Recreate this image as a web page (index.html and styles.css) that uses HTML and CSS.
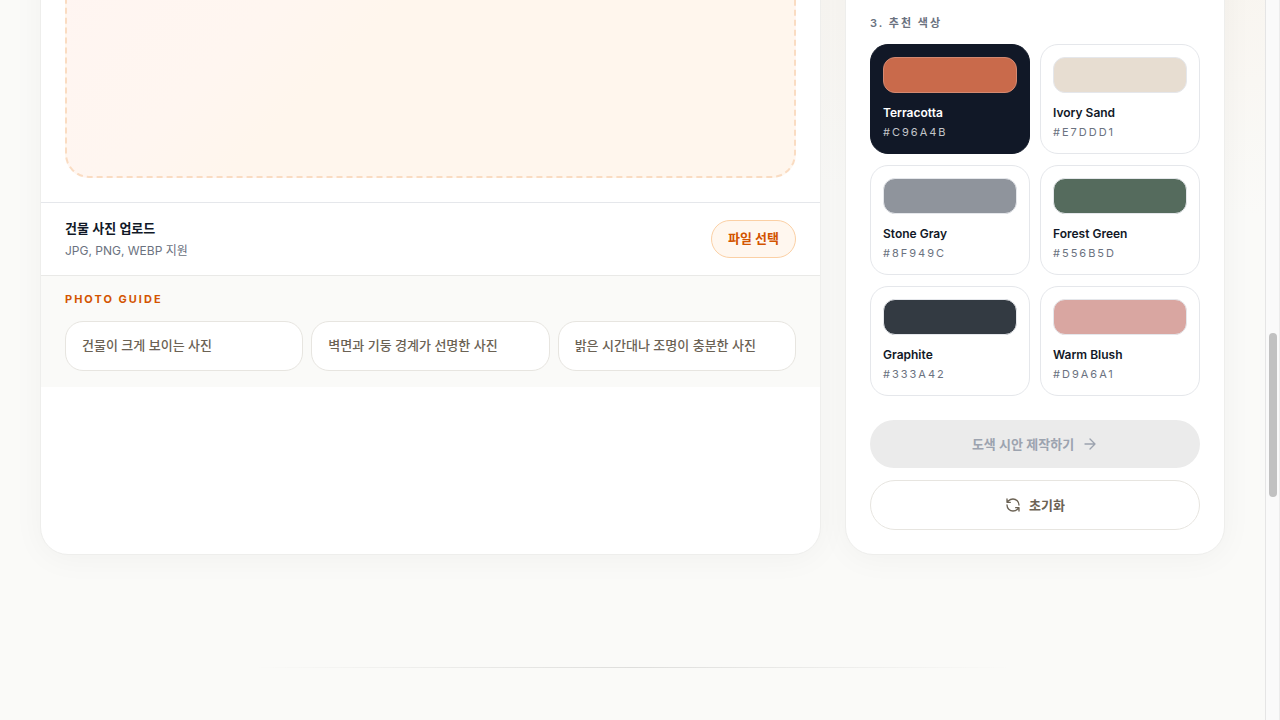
FILE: index.html
```html
<!DOCTYPE html>
<html lang="ko">
<head>
<meta charset="utf-8">
<meta name="viewport" content="width=device-width, initial-scale=1">
<title>도색 시안</title>
<link rel="stylesheet" href="styles.css">
</head>
<body>
<main class="page">
  <div class="studio">
    <section class="card preview">
      <div class="preview-stage"><div class="dropzone"></div></div>
      <div class="upload">
        <div>
          <h2 class="upload-title">건물 사진 업로드</h2>
          <p class="upload-note">JPG, PNG, WEBP 지원</p>
        </div>
        <button class="file-button" type="button">파일 선택</button>
      </div>
      <div class="guide">
        <h3 class="guide-title">PHOTO GUIDE</h3>
        <ul class="guide-list">
          <li class="guide-item">건물이 크게 보이는 사진</li>
          <li class="guide-item">벽면과 기둥 경계가 선명한 사진</li>
          <li class="guide-item">밝은 시간대나 조명이 충분한 사진</li>
        </ul>
      </div>
    </section>

    <section class="card options">
      <h2 class="options-title">3. 추천 색상</h2>
      <div class="palette">
        <button class="color selected" type="button" aria-pressed="true"><span class="swatch terracotta"></span><span class="color-name">Terracotta</span><span class="color-code">#C96A4B</span></button>
        <button class="color" type="button"><span class="swatch ivory"></span><span class="color-name">Ivory Sand</span><span class="color-code">#E7DDD1</span></button>
        <button class="color" type="button"><span class="swatch stone"></span><span class="color-name">Stone Gray</span><span class="color-code">#8F949C</span></button>
        <button class="color" type="button"><span class="swatch forest"></span><span class="color-name">Forest Green</span><span class="color-code">#556B5D</span></button>
        <button class="color" type="button"><span class="swatch graphite"></span><span class="color-name">Graphite</span><span class="color-code">#333A42</span></button>
        <button class="color" type="button"><span class="swatch blush"></span><span class="color-name">Warm Blush</span><span class="color-code">#D9A6A1</span></button>
      </div>
      <div class="actions">
        <button class="action create" type="button" disabled>도색 시안 제작하기
          <svg class="icon" viewBox="0 0 24 24" aria-hidden="true"><path d="M4.500 12h15M12 4.500 19.500 12 12 19.500"/></svg>
        </button>
        <button class="action reset" type="button">
          <svg class="icon" viewBox="0 0 24 24" aria-hidden="true"><path d="M21 12a9 9 0 0 0-9-9 9.750 9.750 0 0 0-6.740 2.740L3 8M3 3v5h5M3 12a9 9 0 0 0 9 9 9.750 9.750 0 0 0 6.740-2.740L21 16M16 16h5v5"/></svg>
          초기화</button>
      </div>
    </section>
  </div>
  <hr class="divider">
</main>
<div class="scroll-track" aria-hidden="true"><div class="scroll-thumb"></div></div>
</body>
</html>
```
FILE: styles.css
```css
* { box-sizing: border-box; }

body {
  margin: 0;
  display: flex;
  height: 100vh;
  overflow: hidden;
  background: #fafaf8;
  color: #111827;
  font-family: Inter, "Noto Sans CJK KR", sans-serif;
}

h2, h3, p, ul { margin: 0; padding: 0; }
button { font: inherit; color: inherit; }

.page {
  flex: 1;
  min-width: 0;
  padding: 0 40px;
  overflow: hidden;
  background: radial-gradient(ellipse 640px 260px at 90% -40px, #f8f4ee, rgba(250, 250, 248, 0));
}

/* The panels begin above the visible part of the page. */
.studio {
  display: grid;
  grid-template-columns: minmax(0, 1fr) 380px;
  gap: 24px;
  margin-top: -100px;
}

.card {
  background: #fff;
  border: 1px solid #eeeeec;
  border-radius: 28px;
  box-shadow: 0 4px 32px rgba(0, 0, 0, 0.04);
  overflow: hidden;
}

.preview-stage { padding: 24px; }
.dropzone {
  min-height: 253px;
  border: 2px dashed #fadcc2;
  border-radius: 24px;
  background: linear-gradient(135deg, #fff5f2, #fff6f0 30%, #fff6ed 42%, #fff6ed);
}

.upload {
  display: flex;
  align-items: center;
  justify-content: space-between;
  padding: 16px 24px;
  border-top: 1px solid #e5e7eb;
}
.upload-title { font-size: 13px; line-height: 18px; font-weight: 600; }
.upload-note { margin-top: 6px; font-size: 12px; line-height: 16px; color: #6b7280; }
.file-button {
  height: 38px;
  padding: 0 16px 3px;
  border: 1px solid #fbd0a5;
  border-radius: 19px;
  background: #fff7ef;
  color: #d35400;
  font-size: 13px;
  font-weight: 700;
}

.guide {
  padding: 15px 24px 16px;
  border-top: 1px solid #e9e9e7;
  background: #fafaf8;
}
.guide-title {
  margin-bottom: 14px;
  font-size: 11px;
  line-height: 16px;
  font-weight: 700;
  letter-spacing: 2px;
  color: #d35400;
}
.guide-list {
  display: grid;
  grid-template-columns: repeat(3, minmax(0, 1fr));
  gap: 8px;
  list-style: none;
}
.guide-item {
  padding: 13px 16px 15px;
  border: 1px solid #e7e5e0;
  border-radius: 18px;
  background: #fff;
  font-size: 13px;
  line-height: 20px;
  font-weight: 500;
  color: #6b6254;
}

.options { padding: 114px 24px 24px; }
.options-title {
  margin-bottom: 13px;
  font-size: 11px;
  line-height: 16px;
  font-weight: 600;
  letter-spacing: 2px;
  color: #6b7280;
}
.palette {
  display: grid;
  grid-template-columns: repeat(2, minmax(0, 1fr));
  gap: 11px 10px;
}
.color {
  display: flex;
  flex-direction: column;
  padding: 12px;
  border: 1px solid #e5e7eb;
  border-radius: 18px;
  background: #fff;
  text-align: left;
}
.swatch {
  height: 36px;
  margin-bottom: 12px;
  border: 1px solid #e5e7eb;
  border-radius: 12px;
}
.color-name { font-size: 12px; line-height: 16px; font-weight: 600; }
.color-code {
  margin-top: 3px;
  font-size: 11px;
  line-height: 17px;
  letter-spacing: 2px;
  color: #6b7280;
}
.selected { border-color: #111827; background: #111827; color: #fff; }
.selected .color-code { color: #c3c5c9; }
.terracotta { background: #c96a4b; border-color: #d48870; }
.ivory { background: #e7ddd1; }
.stone { background: #8f949c; }
.forest { background: #556b5d; }
.graphite { background: #333a42; }
.blush { background: #d9a6a1; }

.actions { display: grid; gap: 12px; margin-top: 24px; }
.action {
  display: flex;
  align-items: center;
  justify-content: center;
  gap: 8px;
  border-radius: 25px;
  font-size: 13px;
  line-height: 20px;
  font-weight: 600;
}
.create { padding: 14px; border: 0; background: #ebebeb; color: #9ca3af; }
.reset { padding: 14px; border: 1px solid #e7e5e0; background: #fff; color: #6b6254; }
.icon {
  width: 16px;
  height: 16px;
  fill: none;
  stroke: currentColor;
  stroke-width: 2;
  stroke-linecap: round;
  stroke-linejoin: round;
}

.divider {
  width: 64%;
  height: 1px;
  margin: 112px auto 0;
  border: 0;
  background: linear-gradient(90deg, transparent, #dededc, transparent);
}

.scroll-track {
  width: 15px;
  padding: 333px 2px 0 3px;
  border-left: 1px solid #e5e5e5;
  border-right: 1px solid #ececec;
  background: #fafafa;
}
.scroll-thumb { width: 8px; height: 164px; border-radius: 4px; background: #c1c1c1; }
```
